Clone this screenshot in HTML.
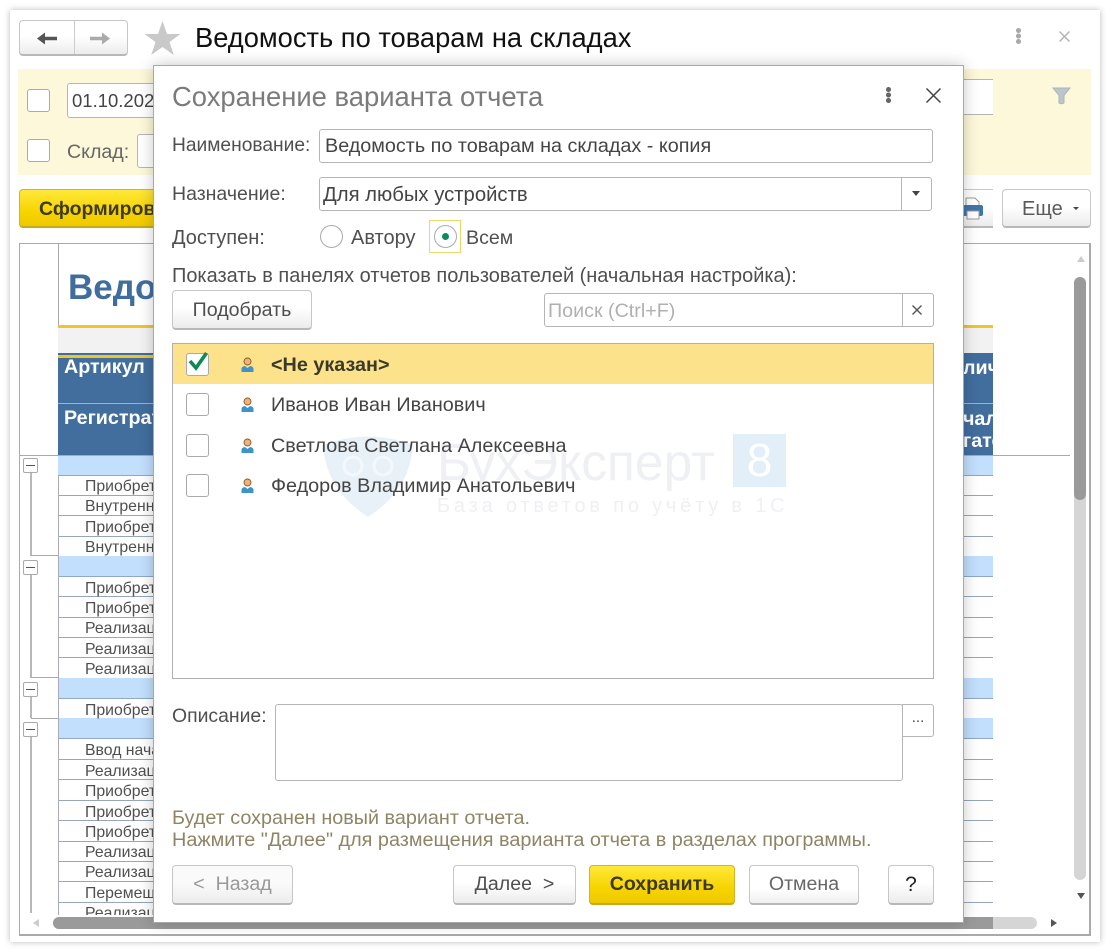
<!DOCTYPE html>
<html><head><meta charset="utf-8"><style>
html,body{margin:0;padding:0;background:#fff}
body{width:1110px;height:952px;overflow:hidden;position:relative;font-family:"Liberation Sans","Noto Sans CJK SC",sans-serif;color:#4f4f4f}
.a{position:absolute;box-sizing:border-box}
.t{position:absolute;white-space:nowrap;line-height:20px;font-size:19.8px;margin-top:.6px}
.inp{position:absolute;box-sizing:border-box;background:#fff;border:1px solid #b5b5b5;border-radius:3px}
.btn{position:absolute;box-sizing:border-box;border:1px solid #c6c6c6;border-bottom:2px solid #b8b8b8;border-radius:4px;background:linear-gradient(#fff 45%,#ececec);text-align:center;font-size:19.6px;color:#4f4f4f}
.y{background:linear-gradient(#ffe83a,#f7d400 60%,#eec900);border:1px solid #d2b32a;border-bottom:2px solid #c7a91c;color:#3d3a1e;font-weight:bold}
.cb{position:absolute;box-sizing:border-box;width:23px;height:23px;background:#fff;border:1px solid #aaa;border-radius:3px}
.l{position:absolute;left:58px;width:935px;height:1px;background:#97a6bd}
.b{position:absolute;left:58px;width:935px;background:#c2dffd;border-bottom:1px solid #8ea8c8;box-sizing:border-box}
.r{position:absolute;left:85px;font-size:15.8px;line-height:18px;white-space:nowrap;color:#4f4f4f;margin-top:1px}
.m{position:absolute;box-sizing:border-box;left:23px;width:15px;height:15px;background:#fff;border:1px solid #aaa;border-radius:2px}
.m:after{content:"";position:absolute;left:2px;right:2px;top:6px;height:1px;background:#555}
.tv{position:absolute;left:30px;width:2px;background:#b8b8b8}
.th{position:absolute;left:31px;width:27px;height:1px;background:#aaa}
.p{position:absolute;left:241px;width:13px;height:16px}
.h{font-weight:bold;color:#fff;font-size:19.7px}
</style></head><body>
<div style="filter:blur(.35px);position:absolute;left:0;top:0;width:1110px;height:952px">
<div class="a" style="left:10px;top:10px;width:1090px;height:932px;background:#fff;box-shadow:0 0 6px rgba(0,0,0,.28)"></div>

<!-- nav -->
<div class="btn" style="left:19px;top:20px;width:109px;height:36px"></div>
<div class="a" style="left:74px;top:21px;width:1px;height:33px;background:#ccc"></div>
<svg class="a" style="left:34px;top:29px" width="26" height="18"><path d="M3 9.500L11 3.500V7.800H23V11.200H11V15.500Z" fill="#555"/></svg>
<svg class="a" style="left:88px;top:29px" width="26" height="18"><path d="M22 9.500L14 3.500V7.800H2V11.200H14V15.500Z" fill="#aaa"/></svg>
<svg class="a" style="left:144px;top:20px" width="37" height="36"><path d="M18.500 1L23 14H36.500L25.500 22L29.800 35L18.500 27L7.200 35L11.500 22L.5 14H14Z" fill="#c9c9c9"/></svg>
<div class="t" style="left:195px;top:21px;font-size:27.3px;line-height:32px;color:#111">Ведомость по товарам на складах</div>
<div class="a" style="left:1016px;top:28px;width:5px;height:16px;background:radial-gradient(circle at 2.5px 2.5px,#aaa 2.4px,transparent 2.6px),radial-gradient(circle at 2.5px 8px,#aaa 2.4px,transparent 2.6px),radial-gradient(circle at 2.5px 13.500px,#aaa 2.4px,transparent 2.6px)"></div>
<svg class="a" style="left:1058px;top:30px" width="13" height="13"><path d="M1.500 1.500L11.500 11.500M11.500 1.500L1.500 11.500" stroke="#b5b5b5" stroke-width="1.5"/></svg>

<!-- filter panel -->
<div class="a" style="left:18px;top:69px;width:1073px;height:106px;background:#fdf8d9"></div>
<div class="cb" style="left:27px;top:89px"></div>
<div class="inp" style="left:67px;top:83px;width:300px;height:35px"></div>
<div class="t" style="left:72px;top:90px;color:#444;font-size:18.500px">01.10.2021</div>
<div class="cb" style="left:27px;top:139px"></div>
<div class="t" style="left:67px;top:141px;color:#666;font-size:19.6px">Склад:</div>
<div class="inp" style="left:137px;top:134px;width:200px;height:34px"></div>
<div class="a" style="left:900px;top:79px;width:93px;height:36px;background:#fff;border-top:1px solid #b5b5b5;border-bottom:1px solid #b5b5b5"></div>
<svg class="a" style="left:1051px;top:86px" width="21" height="20"><path d="M2 2H19L13 9.500V17Q10.500 18.500 8 17V9.500Z" fill="#bcc5ca" stroke="#abb5bb" stroke-width="1"/></svg>

<!-- toolbar -->
<div class="btn y" style="left:19px;top:189px;width:200px;height:39px"></div>
<div class="t" style="left:39px;top:198px;font-weight:bold;color:#3d3a1e;font-size:19.5px">Сформировать</div>
<div class="btn" style="left:900px;top:189px;width:93px;height:39px;border-right:0;border-radius:0"></div>
<svg class="a" style="left:962px;top:197px" width="22" height="23"><path d="M4 1H13L17 5V10H4Z" fill="#fff" stroke="#999"/><rect x="1" y="8" width="20" height="11" rx="2" fill="#3f75a8"/><rect x="5" y="14" width="12" height="8" fill="#fff" stroke="#999"/></svg>
<div class="btn" style="left:1002px;top:189px;width:89px;height:39px"></div>
<div class="t" style="left:1022px;top:198px;color:#5a5a5a;font-size:20px">Еще</div>
<div class="a" style="left:1073px;top:207px;width:0;height:0;border:3px solid transparent;border-top:3px solid #444;border-bottom:0"></div>

<!-- table -->
<div class="a" style="left:19px;top:243px;width:1072px;height:693px;border:1px solid #aaa;border-bottom:2px solid #aaa;border-right:2px solid #aaa"></div>
<div class="a" style="left:58px;top:244px;width:1px;height:211px;background:#aaa"></div>
<div class="a" style="left:19px;top:455px;width:1051px;height:1px;background:#aaa"></div>
<div class="t" style="left:68px;top:266px;font-size:35px;line-height:42px;font-weight:bold;color:#3f6d9e">Ведомость</div>
<div class="a" style="left:58px;top:325px;width:935px;height:3px;background:#eec62b"></div>
<div class="a" style="left:58px;top:328px;width:935px;height:25px;background:#f2f2f2"></div>
<div class="a" style="left:58px;top:353px;width:935px;height:102px;background:#426e9e"></div>
<div class="a" style="left:58px;top:355px;width:95px;height:3px;background:#eec62b"></div>
<div class="a" style="left:58px;top:403px;width:935px;height:1px;background:#9db3cc"></div>
<div class="t h" style="left:64px;top:356px">Артикул</div>
<div class="t h" style="left:64px;top:407px">Регистратор</div>
<div style="position:absolute;left:964px;top:353px;width:29px;height:102px;overflow:hidden">
<div class="t h" style="left:-1px;top:4px">лич</div>
<div class="t h" style="left:-1px;top:55px">чал</div>
<div class="t h" style="left:-1px;top:77px">гато</div>
</div>

<div class="b" style="top:456px;height:20px"></div>
<div class="l" style="top:495px"></div><div class="l" style="top:515px"></div><div class="l" style="top:536px"></div>
<div class="b" style="top:556px;height:21px"></div>
<div class="l" style="top:596px"></div><div class="l" style="top:617px"></div><div class="l" style="top:637px"></div><div class="l" style="top:657px"></div>
<div class="b" style="top:678px;height:21px"></div>
<div class="b" style="top:718px;height:21px"></div>
<div class="l" style="top:759px"></div><div class="l" style="top:779px"></div><div class="l" style="top:800px"></div><div class="l" style="top:820px"></div><div class="l" style="top:841px"></div><div class="l" style="top:861px"></div><div class="l" style="top:881px"></div><div class="l" style="top:902px"></div>
<div class="a" style="left:58px;top:476px;width:1px;height:439px;background:#aab"></div>

<div class="r" style="top:477px">Приобретение</div>
<div class="r" style="top:497px">Внутреннее</div>
<div class="r" style="top:518px">Приобретение</div>
<div class="r" style="top:538px">Внутреннее</div>
<div class="r" style="top:579px">Приобретение</div>
<div class="r" style="top:599px">Приобретение</div>
<div class="r" style="top:619px">Реализация</div>
<div class="r" style="top:640px">Реализация</div>
<div class="r" style="top:660px">Реализация</div>
<div class="r" style="top:701px">Приобретение</div>
<div class="r" style="top:741px">Ввод начальных</div>
<div class="r" style="top:762px">Реализация</div>
<div class="r" style="top:782px">Приобретение</div>
<div class="r" style="top:803px">Приобретение</div>
<div class="r" style="top:823px">Приобретение</div>
<div class="r" style="top:843px">Реализация</div>
<div class="r" style="top:863px">Реализация</div>
<div class="r" style="top:884px">Перемещение</div>
<div style="position:absolute;left:85px;top:900px;width:68px;height:15px;overflow:hidden"><div class="r" style="left:0;top:4px">Реализация</div></div>

<div class="tv" style="top:472px;height:84px"></div><div class="th" style="top:555px"></div>
<div class="tv" style="top:574px;height:104px"></div><div class="th" style="top:677px"></div>
<div class="tv" style="top:696px;height:22px"></div><div class="th" style="top:718px"></div>
<div class="tv" style="top:736px;height:177px"></div>
<div class="m" style="top:458px"></div><div class="m" style="top:560px"></div><div class="m" style="top:682px"></div><div class="m" style="top:722px"></div>

<!-- scrollbars -->
<div class="a" style="left:1074px;top:277px;width:12px;height:603px;background:#d5d5d5;border-radius:6px"></div>
<div class="a" style="left:1074px;top:277px;width:12px;height:223px;background:#9a9a9a;border-radius:6px"></div>
<div class="a" style="left:1077px;top:256px;width:0;height:0;border:4px solid transparent;border-bottom:6px solid #ccc;border-top:0"></div>
<div class="a" style="left:1077px;top:893px;width:0;height:0;border:4px solid transparent;border-top:6px solid #555;border-bottom:0"></div>
<div class="a" style="left:53px;top:917px;width:984px;height:12px;background:#d5d5d5;border-radius:6px"></div>
<div class="a" style="left:53px;top:917px;width:940px;height:12px;background:#9a9a9a;border-radius:6px 0 0 6px"></div>
<div class="a" style="left:33px;top:919px;width:0;height:0;border:4px solid transparent;border-right:6px solid #ccc;border-left:0"></div>
<div class="a" style="left:1051px;top:919px;width:0;height:0;border:4px solid transparent;border-left:6px solid #555;border-right:0"></div>

<!-- modal -->
<div class="a" style="left:153px;top:65px;width:811px;height:858px;background:#fff;border:1px solid #a8a8a8;box-shadow:0 0 14px rgba(0,0,0,.22)"></div>
<div class="t" style="left:172px;top:80px;font-size:27.4px;line-height:32px;color:#7b7b7b">Сохранение варианта отчета</div>
<div class="a" style="left:886px;top:87px;width:5px;height:16px;background:radial-gradient(circle at 2.5px 2.5px,#666 2.4px,transparent 2.6px),radial-gradient(circle at 2.5px 8px,#666 2.4px,transparent 2.6px),radial-gradient(circle at 2.5px 13.500px,#666 2.4px,transparent 2.6px)"></div>
<svg class="a" style="left:925px;top:87px" width="17" height="17"><path d="M1.500 1.500L15.500 15.500M15.500 1.500L1.500 15.500" stroke="#444" stroke-width="1.5"/></svg>

<div class="t" style="left:172px;top:135px;font-size:19.200px">Наименование:</div>
<div class="inp" style="left:319px;top:129px;width:614px;height:34px"></div>
<div class="t" style="left:325px;top:135px;color:#444">Ведомость по товарам на складах - копия</div>

<div class="t" style="left:172px;top:183px;font-size:19.5px">Назначение:</div>
<div class="inp" style="left:319px;top:177px;width:613px;height:34px"></div>
<div class="a" style="left:901px;top:178px;width:1px;height:32px;background:#b5b5b5"></div>
<div class="t" style="left:323px;top:184px;color:#444;font-size:20.300px">Для любых устройств</div>
<div class="a" style="left:912px;top:191px;width:0;height:0;border:4px solid transparent;border-top:5px solid #444;border-bottom:0"></div>

<div class="t" style="left:172px;top:227px;font-size:20px">Доступен:</div>
<div class="a" style="left:320px;top:225px;width:23px;height:23px;border:1px solid #aaa;border-radius:50%;background:#fff"></div>
<div class="t" style="left:351px;top:227px;font-size:20px">Автору</div>
<div class="a" style="left:429px;top:220px;width:32px;height:33px;border:1px solid #eed66a"></div>
<div class="a" style="left:434px;top:225px;width:23px;height:23px;border:1px solid #aaa;border-radius:50%;background:#fff"></div>
<div class="a" style="left:442px;top:233px;width:7px;height:7px;border-radius:50%;background:#0d8a5c"></div>
<div class="t" style="left:466px;top:227px;font-size:19.6px">Всем</div>

<div class="t" style="left:172px;top:265px;font-size:19.95px">Показать в панелях отчетов пользователей (начальная настройка):</div>
<div class="btn" style="left:172px;top:290px;width:140px;height:40px;line-height:38px">Подобрать</div>
<div class="inp" style="left:544px;top:293px;width:390px;height:34px"></div>
<div class="a" style="left:902px;top:294px;width:1px;height:32px;background:#b5b5b5"></div>
<div class="t" style="left:548px;top:300px;color:#b0b0b0;font-size:19.7px">Поиск (Ctrl+F)</div>
<svg class="a" style="left:911px;top:304px" width="12" height="12"><path d="M1.500 1.500L10.500 10.500M10.500 1.500L1.500 10.500" stroke="#555" stroke-width="1.4"/></svg>

<!-- watermark -->
<svg class="a" style="left:320px;top:430px" width="96" height="90"><path d="M3 15Q48 -2 93 15Q90 60 48 87Q6 60 3 15Z" fill="#e9f1f8"/><circle cx="33" cy="36" r="9" fill="none" stroke="#f4f8fb" stroke-width="3"/><circle cx="63" cy="36" r="9" fill="none" stroke="#f4f8fb" stroke-width="3"/></svg>
<div class="t" style="left:437px;top:434px;font-size:51.5px;line-height:54px;color:#eef0f3">БухЭксперт</div>
<div class="a" style="left:733px;top:434px;width:53px;height:53px;background:#e3eff8;color:#fff;font-size:46px;line-height:53px;text-align:center">8</div>
<div class="t" style="left:437px;top:495px;font-size:20px;letter-spacing:3.8px;color:#eff0f3">База ответов по учёту в 1С</div>

<!-- list -->
<div class="a" style="left:172px;top:343px;width:762px;height:336px;border:1px solid #b0b0b0"></div>
<div class="a" style="left:173px;top:344px;width:760px;height:40px;background:#fde28c"></div>
<div class="cb" style="left:186px;top:353px"></div>
<svg class="a" style="left:187px;top:349px" width="24" height="24"><path d="M3 12L9 19L19.500 4" fill="none" stroke="#0f8a55" stroke-width="3.600"/></svg>
<div class="cb" style="left:186px;top:393px"></div>
<div class="cb" style="left:186px;top:434px"></div>
<div class="cb" style="left:186px;top:474px"></div>
<svg class="p" style="top:357px" viewBox="0 0 13 16"><circle cx="6.500" cy="4.500" r="3.500" fill="#efb27a" stroke="#8a5a20" stroke-width=".9"/><path d="M0.500 15V12Q0.500 9.500 4 9L6.500 11L9 9Q12.500 9.500 12.500 12V15Z" fill="#3d94c9"/></svg>
<svg class="p" style="top:397px" viewBox="0 0 13 16"><circle cx="6.500" cy="4.500" r="3.500" fill="#efb27a" stroke="#8a5a20" stroke-width=".9"/><path d="M0.500 15V12Q0.500 9.500 4 9L6.500 11L9 9Q12.500 9.500 12.500 12V15Z" fill="#3d94c9"/></svg>
<svg class="p" style="top:438px" viewBox="0 0 13 16"><circle cx="6.500" cy="4.500" r="3.500" fill="#efb27a" stroke="#8a5a20" stroke-width=".9"/><path d="M0.500 15V12Q0.500 9.500 4 9L6.500 11L9 9Q12.500 9.500 12.500 12V15Z" fill="#3d94c9"/></svg>
<svg class="p" style="top:478px" viewBox="0 0 13 16"><circle cx="6.500" cy="4.500" r="3.500" fill="#efb27a" stroke="#8a5a20" stroke-width=".9"/><path d="M0.500 15V12Q0.500 9.500 4 9L6.500 11L9 9Q12.500 9.500 12.500 12V15Z" fill="#3d94c9"/></svg>
<div class="t" style="left:271px;top:354px;font-weight:bold;color:#3a3a2a">&lt;Не указан&gt;</div>
<div class="t" style="left:271px;top:394px;color:#444">Иванов Иван Иванович</div>
<div class="t" style="left:271px;top:435px;color:#444">Светлова Светлана Алексеевна</div>
<div class="t" style="left:271px;top:475px;color:#444">Федоров Владимир Анатольевич</div>

<!-- description -->
<div class="t" style="left:172px;top:705px;font-size:19.4px">Описание:</div>
<div class="inp" style="left:275px;top:704px;width:628px;height:77px"></div>
<div class="inp" style="left:902px;top:704px;width:32px;height:33px;border-radius:0 3px 3px 0;text-align:center;font-size:15px;line-height:26px;color:#444">...</div>

<div class="t" style="left:172px;top:807px;color:#8f8464;font-size:19.8px">Будет сохранен новый вариант отчета.</div>
<div class="t" style="left:172px;top:829px;color:#8f8464;font-size:19.85px">Нажмите "Далее" для размещения варианта отчета в разделах программы.</div>

<div class="btn" style="left:172px;top:865px;width:121px;height:40px;line-height:37px;color:#999;background:linear-gradient(#fafafa 45%,#ededed)">&lt;&nbsp; Назад</div>
<div class="btn" style="left:453px;top:865px;width:123px;height:40px;line-height:37px">Далее &nbsp;&gt;</div>
<div class="btn y" style="left:589px;top:865px;width:146px;height:40px;line-height:37px;font-size:19.5px">Сохранить</div>
<div class="btn" style="left:749px;top:865px;width:110px;height:40px;line-height:37px;background:linear-gradient(#fff 60%,#f0f0f0);color:#666">Отмена</div>
<div class="btn" style="left:888px;top:865px;width:46px;height:40px;line-height:37px;color:#222;font-size:21px">?</div>
</div>
</body></html>
